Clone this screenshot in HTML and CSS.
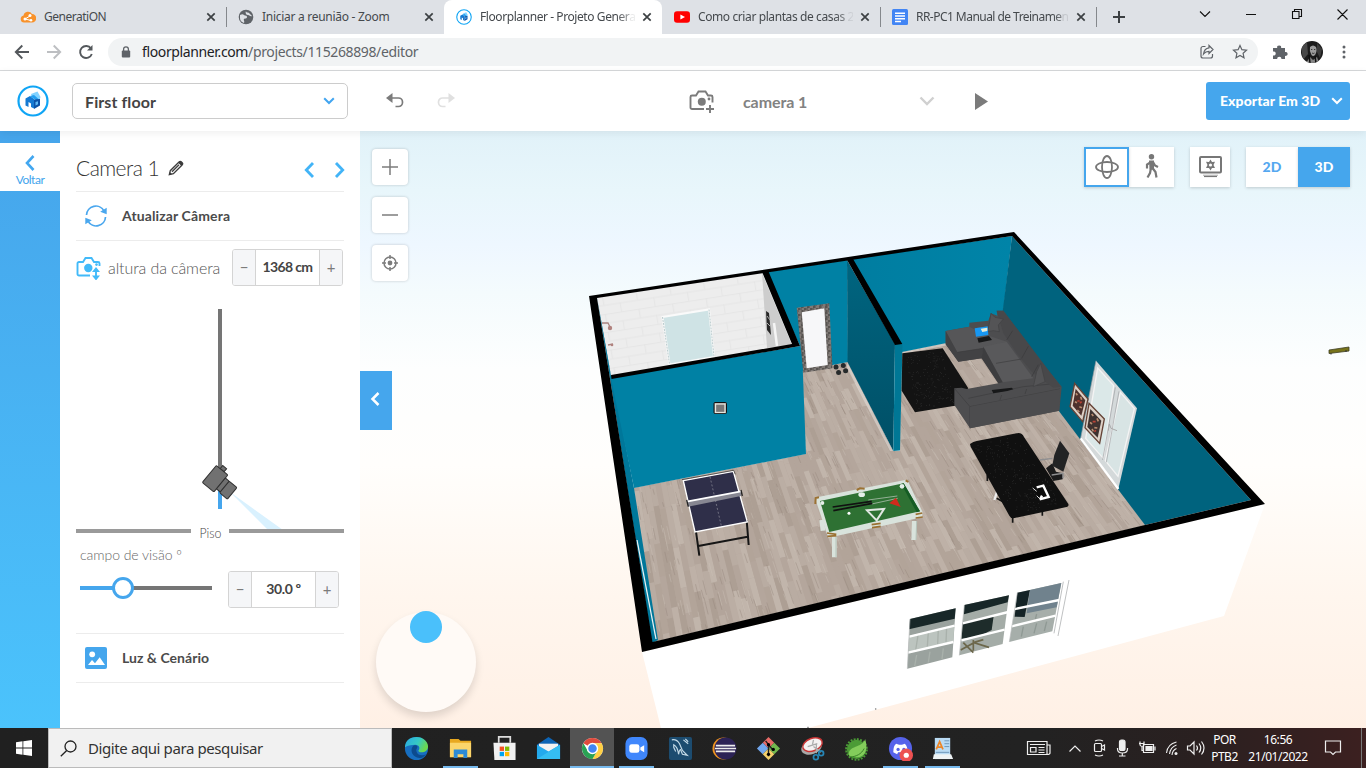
FILE: index.html
```html
<!DOCTYPE html>
<html lang="pt-BR">
<head>
<meta charset="utf-8">
<title>Floorplanner - Projeto GeneratiON</title>
<link rel="stylesheet" href="styles.css">
</head>
<body>
<div class="tabs">
  <div class="tab">
    <svg class="fav" viewBox="0 0 16 16"><path d="M4 13.500a3.600 3.600 0 0 1-.5-7.100A4.600 4.600 0 0 1 12 5a4.200 4.200 0 0 1 0 8.500z" fill="#f8922b"/><path d="M5 10l5-3M5 10l6 1.500" stroke="#fff" stroke-width="1"/><circle cx="5" cy="10" r="1.500" fill="#fff"/><circle cx="10" cy="6.500" r="1.500" fill="#fff"/><circle cx="11" cy="11.300" r="1.300" fill="#fff"/></svg>
    <span class="tab-title t1">GeneratiON</span><svg class="x" viewBox="0 0 10 10"><path d="M1.300 1.300l7.400 7.400M8.700 1.300L1.300 8.700"/></svg>
  </div>
  <div class="tab sep">
    <svg class="fav" viewBox="0 0 16 16"><circle cx="8" cy="8" r="7.300" fill="#5f6368"/><path d="M2 6c2-1 3-1 4 0s3 0 3 2-2 1-3 2 1 2 0 4C3 13 2 11 2 9zM8 2c0 2 2 1 3 2s2 2 3 3c-2 1-2-1-4-1S7 4 8 2z" fill="#dee1e6"/></svg>
    <span class="tab-title t2">Iniciar a reunião - Zoom</span><svg class="x" viewBox="0 0 10 10"><path d="M1.300 1.300l7.400 7.400M8.700 1.300L1.300 8.700"/></svg>
  </div>
  <div class="tab active">
    <svg class="fav" viewBox="0 0 32 32"><use href="#fp-logo"/></svg>
    <span class="tab-title t3 fade">Floorplanner - Projeto Gener<i>a</i></span><svg class="x" viewBox="0 0 10 10"><path d="M1.300 1.300l7.400 7.400M8.700 1.300L1.300 8.700"/></svg>
  </div>
  <div class="tab">
    <svg class="fav" viewBox="0 0 16 16"><rect y="2.300" width="16" height="11.400" rx="3" fill="#f00"/><path d="M6.400 5.400v5.200L11 8z" fill="#fff"/></svg>
    <span class="tab-title t4 fade">Como criar plantas de casas <i>2</i></span><svg class="x" viewBox="0 0 10 10"><path d="M1.300 1.300l7.400 7.400M8.700 1.300L1.300 8.700"/></svg>
  </div>
  <div class="tab sep end">
    <svg class="fav" viewBox="0 0 16 16"><rect width="16" height="16" rx="1.500" fill="#4285f4"/><path d="M3 4.300h10M3 7h10M3 9.700h10M3 12.400h6" stroke="#fff" stroke-width="1.500"/></svg>
    <span class="tab-title t5 fade">RR-PC1 Manual de Treiname<i>n</i></span><svg class="x" viewBox="0 0 10 10"><path d="M1.300 1.300l7.400 7.400M8.700 1.300L1.300 8.700"/></svg>
  </div>
  <svg class="plus" viewBox="0 0 12 12"><path d="M6 0v12M0 6h12" stroke="#3c4043" stroke-width="2"/></svg>
  <svg class="wins" viewBox="0 0 160 34" fill="none" stroke="#111" stroke-width="1.100"><path d="M4 11.500l5 5 5-5M50 14.500h10M98.500 12v-2.500h7v7H103M96.500 11.500h6.500v7h-6.500zM141.500 9.500l10 10M151.500 9.500l-10 10"/></svg>
</div>

<div class="nav">
  <svg class="navbtns" viewBox="0 0 108 36" fill="none" stroke="#54585c" stroke-width="1.900"><path d="M29 18H16.500M22.300 11.500L15.800 18l6.500 6.500"/><path d="M47 18h12.500M53.700 11.500l6.500 6.500-6.500 6.500" stroke="#bdbfc2"/><path d="M91 14.500a6 6 0 1 0 .8 5.500"/><path d="M92.500 11v5.500H87z" fill="#54585c" stroke="none"/></svg>
  <div class="omni">
    <svg class="lock" viewBox="0 0 10 12"><path d="M2.600 5V3.300a2.400 2.400 0 0 1 4.800 0V5" fill="none" stroke="#5f6368" stroke-width="1.300"/><rect x=".8" y="4.500" width="8.400" height="7" rx="1" fill="#5f6368"/></svg>
    <span class="url">floorplanner.com<i>/projects/115268898/editor</i></span>
    <svg class="omni-icons" viewBox="0 0 54 20" fill="none" stroke="#5f6368" stroke-width="1.200"><path d="M6.500 4.500H4a2 2 0 0 0-2 2V14a2 2 0 0 0 2 2h7.500a2 2 0 0 0 2-2v-2"/><path d="M10 3.500l4 4-4 4V9.300C7.500 9.300 6 10 4.500 12c.4-3.300 2.200-5.700 5.500-6.200z"/><path d="M41 3.500l1.900 4.200 4.600.5-3.400 3.100.9 4.500-4-2.300-4 2.300.9-4.500-3.400-3.100 4.600-.5z"/></svg>
  </div>
  <svg class="ext" viewBox="0 0 16 16"><path d="M1 4h4.200a2 2 0 1 1 3.900 0H13v4a2 2 0 1 1 0 3.800V15H9.500a2 2 0 1 0-4.400 0H1v-3.500a2.100 2.100 0 1 0 0-4z" fill="#5f6368"/></svg>
  <svg class="avatar" viewBox="0 0 22 22"><defs><clipPath id="av"><circle cx="11" cy="11" r="11"/></clipPath></defs><g clip-path="url(#av)"><rect width="22" height="22" fill="#1c1c1c"/><path d="M0 5l6-4 1 12-5 6z" fill="#484848"/><path d="M16 2l5 6-2 9-3-6z" fill="#3c3c3c"/><path d="M9 6q3-3 6 0 1.500 4-1 8-2 2-3.500 0Q8 10 9 6" fill="#9c9c9c"/><path d="M10 8.500h1.300M13 8.500h1.300M11 12q1.300 1 2.500 0" stroke="#2b2b2b" stroke-width=".9" fill="none"/><path d="M5 22l4-6 3 3 4-3 2 6z" fill="#858585"/><path d="M8 14l1 8M14 15l1 7" stroke="#111" stroke-width="1.500"/></g></svg>
  <svg class="dots" viewBox="0 0 4 16" fill="#5f6368"><circle cx="2" cy="3" r="1.500"/><circle cx="2" cy="8" r="1.500"/><circle cx="2" cy="13" r="1.500"/></svg>
</div>

<div class="appbar">
  <svg class="logo" viewBox="0 0 32 32"><g id="fp-logo"><circle cx="16" cy="16" r="14.500" fill="#fff" stroke="#0fa5f5" stroke-width="2.200"/><path d="M14 9l6.500-2.500L23.500 12l-1 3-7-2z" fill="#82d2ff"/><path d="M8.500 13.500l4.500-2.500 4 3v9.500l-3-1.500v-3.500l-2.500-1.500V22l-3-1.500z" fill="#1479d2"/><path d="M13 11l4-1 5 4.500-2 1-3-1.500z" fill="#239ff0"/><path d="M17 14.500l6-.5v6.500l-6 3.500z" fill="#0b52a7"/><path d="M18.500 17l2.500-.8v3l-2.500 1.300z" fill="#5fb9f5"/></g></svg>
  <div class="floor-select"><span>First floor</span><svg width="12" height="8" viewBox="0 0 12 8"><path d="M1.200 1.200L6 6l4.800-4.800" fill="none" stroke="#42a5f0" stroke-width="2"/></svg></div>
  <svg class="undo" viewBox="0 0 18 16"><path d="M5 5h7.500a4 4 0 0 1 4 4v.5a4 4 0 0 1-4 4H9.500" fill="none" stroke="#7b7b7b" stroke-width="1.700"/><path d="M6.500 0v10L0 5z" fill="#7b7b7b"/></svg>
  <svg class="undo redo" viewBox="0 0 18 16"><path d="M13 5H5.500a4 4 0 0 0-4 4v.5a4 4 0 0 0 4 4h3" fill="none" stroke="#e0e0e0" stroke-width="1.700"/><path d="M11.500 0v10L18 5z" fill="#e0e0e0"/></svg>
  <svg class="addcam" viewBox="0 0 26 23" fill="none" stroke="#7b7b7b" stroke-width="1.900"><path d="M15 19H3a1.500 1.500 0 0 1-1.500-1.500V7A1.500 1.500 0 0 1 3 5.500h4L9.500 1.500h7L19 5.500h3A1.500 1.500 0 0 1 23.500 7v5.500M17 19h8M21 15v8"/><circle cx="12.800" cy="11.800" r="4" fill="#7b7b7b" stroke="none"/><circle cx="20" cy="9" r="1.400" fill="#7b7b7b" stroke="none"/></svg>
  <span class="cam-name">camera 1</span>
  <svg class="cam-chev" viewBox="0 0 16 10"><path d="M1.500 1.500L8 8l6.500-6.500" fill="none" stroke="#d0d0d0" stroke-width="2.400"/></svg>
  <svg class="play" viewBox="0 0 13 17"><path d="M0 0l13 8.500L0 17z" fill="#7b7b7b"/></svg>
  <div class="export"><span>Exportar Em 3D</span><svg width="12" height="8" viewBox="0 0 12 8"><path d="M1.200 1.200L6 6l4.800-4.800" fill="none" stroke="#fff" stroke-width="2"/></svg></div>
</div>

<div class="main">
  <div class="rail"><div class="back"><svg width="10" height="16" viewBox="0 0 10 16"><path d="M8.500 1L2 8l6.500 7" fill="none" stroke="#42a7f0" stroke-width="2.600"/></svg><span>Voltar</span></div></div>
  <div class="side">
    <div class="row title"><span>Camera 1</span>
      <svg class="pencil" viewBox="0 0 16 16"><path d="M1.300 14.700l1-4L11 2q1.300-1.200 2.500 0l.6.600q1.200 1.200 0 2.400l-8.700 8.700z" fill="#fff" stroke="#3c3c3c" stroke-width="1.300"/><path d="M10.200 2.800l3 3 1.300-1.400q.5-1.200-.4-2.100t-2.400-.8zM1 15l.9-3 2.100 2.100z" fill="#3c3c3c"/><path d="M4 11.800l7-7" stroke="#3c3c3c" stroke-width="1.300"/></svg>
      <svg class="arrows" viewBox="0 0 42 16" fill="none" stroke="#42b4f7" stroke-width="2.800"><path d="M9 1L2.300 8 9 15M32 1l6.700 7L32 15"/></svg>
    </div>
    <div class="row item">
      <svg class="ico" viewBox="0 0 24 24"><path d="M2.500 11A9.300 9.300 0 0 1 20 7M21.500 13A9.300 9.300 0 0 1 4 17" fill="none" stroke="#4aa7ee" stroke-width="1.700"/><path d="M22.700 3.800v6.500l-6.500-2.500zM1.300 20.200v-6.500l6.500 2.500z" fill="#4aa7ee"/></svg>
      <b>Atualizar Câmera</b></div>
    <div class="height-row">
      <svg class="hcam" viewBox="0 0 26 24" fill="none" stroke="#42baf9" stroke-width="1.900"><path d="M14 19.500H3A1.500 1.500 0 0 1 1.500 18V7.500A1.500 1.500 0 0 1 3 6h4l2.500-4h6L18 6h4a1.500 1.500 0 0 1 1.500 1.500V10M20 14v8"/><circle cx="12.300" cy="12" r="4.200" fill="#42baf9" stroke="none"/><circle cx="20.500" cy="8.600" r="1.300" fill="#42baf9" stroke="none"/><path d="M20 11l4 5h-8zM20 24.500l4-5h-8z" fill="#42baf9" stroke="none"/></svg>
      <span>altura da câmera</span>
      <div class="stepper"><em>−</em><b>1368 cm</b><em>+</em></div>
    </div>
    <svg class="diagram" viewBox="76 295 268 250">
      <path d="M220 309v174" stroke="#757575" stroke-width="4"/><path d="M220 483v26" stroke="#45a6ed" stroke-width="4"/>
      <path d="M230 492l53 38h-15z" fill="#d9f1fe"/>
      <path d="M76 531h115M229 531h115" stroke="#9a9a9a" stroke-width="4"/>
      <g transform="translate(215.500 479) rotate(-50.500)" fill="#717171" stroke="#303030" stroke-width="1"><path d="M11-3h4v5h-4z"/><rect x="-11" y="-8" width="22" height="15" rx="1"/><rect x="-7" y="7" width="14" height="5"/><rect x="-8" y="12" width="15" height="10" rx="1"/></g>
      <text x="199.500" y="537.500" textLength="22" lengthAdjust="spacingAndGlyphs" class="piso">Piso</text>
    </svg>
    <div class="fov-label">campo de visão º</div>
    <div class="fov"><div class="slider"><div class="fill"></div><div class="rest"></div><div class="knob"></div></div><div class="stepper"><em>−</em><b>30.0 º</b><em>+</em></div></div>
    <div class="row item light">
      <svg class="ico" viewBox="0 0 24 24"><rect x="1" y="1" width="22" height="22" rx="2" fill="#45a6ed"/><circle cx="8.200" cy="8.300" r="2.900" fill="#fff"/><path d="M4 19l4-5 3 3.300 4.700-6 5.300 7.700z" fill="#fff"/></svg>
      <b>Luz &amp; Cenário</b></div>
  </div>

  <div class="view">
    <svg class="scene" viewBox="360 131 1006 597">
      <defs>
        <clipPath id="floorclip"><path d="M634 488L806 454 801 371 848 362 893 451 900 451 902 352 1000 332 1146 525 653 642z"/></clipPath>
        <pattern id="tiles" width="34" height="18" patternUnits="userSpaceOnUse" patternTransform="matrix(.988 -.155 .16 .988 597 297)"><rect width="34" height="18" fill="#ededed"/><path d="M0 .5h34M0 9.500h34M5.500 0v9M22 9v9" stroke="#e3e3e3" stroke-width=".8"/></pattern>
        <pattern id="stone" width="6" height="6" patternUnits="userSpaceOnUse"><rect width="6" height="6" fill="#696461"/><path d="M0 1h3M4 3h2M1 5h2" stroke="#968f8b"/><path d="M3 1h2M0 3h2M4 5h1" stroke="#474341"/></pattern>
        <linearGradient id="bw" x2="1" y2="0"><stop stop-color="#007da0"/><stop offset="1" stop-color="#0084a8"/></linearGradient>
        <linearGradient id="pt" y2="1" x2="0"><stop stop-color="#006580"/><stop offset="1" stop-color="#004f66"/></linearGradient>
      </defs>
      <path d="M642 652L1265 504 1224 616 808 728H661z" fill="#fff"/>
      <g clip-path="url(#floorclip)"><rect x="600" y="310" width="560" height="350" fill="#b5a79d"/><g id="planks"></g></g>
      <path d="M847 362l46 89-3 0-43-83zM902 352l98-20v3l-98 19z" fill="#fff" opacity=".35"/>
      <!-- walls -->
      <path d="M597 297L612 375 634 488 658 640 652 643z" fill="#00779a"/>
      <path d="M637 540L656 639" stroke="#e9f1f3" stroke-width="1.300"/>
      <path d="M597 297L762 273 792 345 611 376z" fill="url(#tiles)"/>
      <path d="M762 273L792 345 767 348z" fill="#cdcdcd"/>
      <path d="M597 297l14 79-4-20z" fill="#00789c"/>
      <path d="M662.500 317L709 309.500 714 357 669.500 364.500z" fill="#cfe3e5" stroke="#fafafa" stroke-width="2"/>
      <path d="M662.500 317l7 47M709 309.500l5 47" stroke="#9fb8ba" stroke-width=".7" stroke-dasharray="2 1"/>
      <path d="M766 311l3 2 2 22-4-5z" fill="#262626"/><path d="M767 316l3 4M767 323l4 4" stroke="#aaa"/><path d="M774 323l3 23" stroke="#f5f5f5" stroke-width="2.500"/>
      <path d="M602 323h6l2 4M608 345l5-1" stroke="#aa8480" stroke-width="1.300" fill="none"/><circle cx="610" cy="328" r="2.200" fill="#b1827e"/><circle cx="612" cy="345" r="1.300" fill="#b1827e"/>
      <path d="M766 272L847 260 848 362 802 371 800 346z" fill="#0081a4"/>
      <path d="M851 259L1012 236 1001 332 902 352z" fill="url(#bw)"/>
      <path d="M1012 236L1251 500 1145 525 1000 333z" fill="#00637e"/>
      <path d="M611 378L800 346 802 350 806 454 634 488z" fill="#0081a4"/>
      <path d="M847 260L895 344 893.300 451 847.500 362z" fill="url(#pt)"/>
      <path d="M895 344h7.500L900 450.500l-6.700.5z" fill="#007795"/>
      <!-- mirror and weights -->
      <path d="M796.700 307.700L829.300 303.300 832.500 368.300 803.300 372.700z" fill="url(#stone)"/><path d="M801.700 312.300L824.300 308.300 827.700 365 806.700 368.300z" fill="#f7f7f9"/>
      <g fill="#262a2b"><circle cx="836" cy="367" r="2.500"/><circle cx="843.300" cy="365.500" r="2.500"/><circle cx="838.600" cy="372.500" r="2.500"/><circle cx="845.600" cy="370.700" r="2.500"/></g>
      <rect x="714" y="402.500" width="12.500" height="11" rx="1" fill="#777" stroke="#111"/><rect x="715.500" y="404" width="9.500" height="8.500" fill="#777" stroke="#e5e5dd" stroke-width="1.300"/>
      <!-- living area -->
      <g transform="translate(840 225) scale(.33333)">
        <path d="M187 385L308 370 385 490 345 542 225 562 185 497z" fill="#131313"/><g id="rugfleck"></g>
        <path d="M317 318L388 305V293L445 287 453 265 472 272 470 257 490 257 560 350 600 405 665 485 658 557 390 610 343 540V490L365 488 380 492 475 475 425 400 355 410 317 358z" fill="#4d4d4f"/>
        <path d="M317 318L388 305 440 330 500 350 430 372 352 382z" fill="#565658"/><path d="M352 382L430 370 425 400 355 410 317 358V318z" fill="#424244"/>
        <path d="M430 365L500 350 580 460 488 472z" fill="#59595b"/><path d="M430 365L488 472 475 475 425 400z" fill="#3d3d3f"/>
        <path d="M468 415L545 402M352 382L430 370M343 490L390 545 660 492M390 545V610M480 525l5-15M555 507l5-15M385 520L550 485 655 475" fill="none" stroke="#3c3c3e" stroke-width="2"/>
        <path d="M470 257L490 257 570 362 663 485 640 488 575 440 530 385 490 325z" fill="#48484a"/><path d="M500 345l18-28M545 400l20-36M575 455l20-36" stroke="#39393b" stroke-width="2"/>
        <path d="M453 265L465 277 490 282 475 300 478 320 460 317 443 320 448 295zM590 440L602 415 615 470 580 485z" fill="#545456" stroke="#414143" stroke-width="2"/>
        <path d="M390 545L660 492 658 557 390 610z" fill="#4c4c4e"/>
        <path d="M455 495l60-7 5 5-18 5-42 7zM412 340l35-7 9 12-40 8z" fill="#171819"/><path d="M404 310L443 304 445 330 408 335z" fill="#1797f2"/><path d="M422 311l20-3v10l-15 3z" fill="#e7edda"/>
        <!-- glazed door -->
        <path d="M768 407L891 550 835 792 722 640z" fill="#d4d9da"/><path d="M773 429L821 482 790 700 737 640z" fill="#dbe8e8" stroke="#f4f4f4" stroke-width="4"/><path d="M841 502L883 551 834 754 796 707z" fill="#d8e4e4" stroke="#f4f4f4" stroke-width="4"/><path d="M826 487L788 705M837 499L799 712M768 407L722 640" stroke="#9d9fa1" stroke-width="2"/><path d="M722 640L835 792" stroke="#fff" stroke-width="7"/><path d="M805 617l3-20 5 13 18 7" fill="none" stroke="#aaa" stroke-width="3"/>
        <path d="M704 475L744 522 728 590 690 545z" fill="#ddd1c7" stroke="#654337" stroke-width="4"/><path d="M707 491L736 526 724 572 698 542z" fill="#4d312d"/><path d="M747 535L793 582 779 655 735 608z" fill="#ddd1c7" stroke="#654337" stroke-width="4"/><path d="M751 552L784 587 773 638 742 606z" fill="#3e3230"/><path d="M708 505l4 6M722 515l3 9M705 530l6 3M718 545l8 3M712 555l6 6M755 567l5 6M771 580l4 9M750 592l6 5M763 608l9 1M756 612l4 7" fill="none" stroke="#b98d70" stroke-width="5"/><path d="M712 528h7M720 534l5-4M758 590h9M763 620l5-4" stroke="#b94135" stroke-width="5"/>
        <!-- desk -->
        <path d="M473 795L463 825" stroke="#eee" stroke-width="7"/><path d="M442 750v18M518 875v18M607 855v17M470 820l22 12" stroke="#151515" stroke-width="5"/>
        <path d="M390 657Q400 650 410 648L535 624Q547 624 552 636L685 837Q688 845 676 847L520 880Q512 880 508 872L392 665z" fill="#101010"/><g id="deskfleck"></g>
        <path d="M582 789L610 784 625 815 598 822z" fill="#0c0c0c"/><path d="M590 787l20-5 16 34-27 7M606 812l-6 11" fill="none" stroke="#fff" stroke-width="7"/><path d="M578 789l12 10M590 812l8 8" stroke="#ddd" stroke-width="3"/>
        <path d="M618 730L637 715 648 740 668 745 668 763 640 768z" fill="#1b1b1c"/><path d="M660 647L688 685 670 740 637 722 643 690z" fill="#222324"/><path d="M600 705l37-5M635 750l34-5v15" fill="none" stroke="#8e8e90" stroke-width="4"/>
      </g>
      <!-- game tables and facade windows -->
      <g transform="translate(590 440) scale(.33333)">
        <path d="M318 275l10 72M470 240l6 75M325 318l148-28" stroke="#161616" stroke-width="6"/>
        <path d="M280 122L430 94 472 246 315 276z" fill="#2f2f49" stroke="#fff" stroke-width="4"/><path d="M276 119L431 91l5 12" fill="none" stroke="#222" stroke-width="2"/><path d="M360 110l34 148" stroke="#94949f" stroke-width="2" stroke-dasharray="6 6"/>
        <path d="M290 184L453 154 453 168 294 200z" fill="#878792"/><path d="M290 185L453 154" stroke="#fff" stroke-width="5"/><path d="M290 180l5 20M453 150l4 18" stroke="#222" stroke-width="4"/>
        <path d="M695 240l4 32M733 290v62M973 243l-2 57" stroke="#d9e3dc" stroke-width="14"/><path d="M738 290v62M980 243l-2 57" stroke="#b6c5bb" stroke-width="3"/>
        <path d="M676 177Q678 172 684 171L945 120Q953 120 956 128L998 217 996 232 715 293z" fill="#d9e3dc"/><path d="M690 183L941 130 990 214 718 276z" fill="#2e7133"/><path d="M941 130L990 214 980 217 934 132z" fill="#155c24"/>
        <path d="M676 192l1-18 10-2M947 121l8 5M800 150l10-5 14 1" fill="none" stroke="#9b7132" stroke-width="6"/><path d="M711 279l28 4M712 289l27-2M845 254l27-4M846 263l26-4M977 223l20-4M977 234l21-3" stroke="#9b7132" stroke-width="5"/>
        <ellipse cx="815" cy="164" rx="10" ry="7" fill="#e4eee8"/><circle cx="697" cy="189" r="6" fill="#e4eee8"/><circle cx="936" cy="139" r="7" fill="#e4eee8"/><circle cx="777" cy="220" r="4.500" fill="#fff"/>
        <path d="M835 180L922 168M845 192l78-17" stroke="#c6cfc5" stroke-width="2"/><path d="M728 201L845 184M730 212L847 190" stroke="#111" stroke-width="5"/><path d="M831 211L882 207 860 241z" fill="none" stroke="#e1e7e2" stroke-width="6"/><path d="M898 190l20-17 14 28z" fill="#d12b1d"/>
        <path d="M960 537L1097 505 1087 652 952 686z" fill="#9aa29e"/><path d="M960 537L1097 505 1094 536 957 568z" fill="#182728"/><path d="M957 588l136-31-3 47-135 33z" fill="#bcc4bf"/><path d="M985 580l-8 50M1015 575l-3 45M1045 568l-2 45M1070 562l-2 45M980 645l-6 33M1020 635l-5 32M1060 625l-4 32" stroke="#a9b1ab" stroke-width="4"/><path d="M958 590L1094 557M954 638L1090 606" stroke="#fff" stroke-width="7"/>
        <path d="M1123 495L1257 466 1238 612 1108 646z" fill="#a4aca7"/><path d="M1123 495L1257 466 1253 487 1122 523z" fill="#182728"/><path d="M1118 549L1211 528 1205 570 1165 590 1115 596z" fill="#1e2c2b"/><path d="M1112 630l40-22 45 14M1120 608l30 30M1150 600v32M1150 608l30-9" stroke="#6c674b" stroke-width="5" fill="none"/><path d="M1118 550L1255 516M1114 601L1244 569" stroke="#fff" stroke-width="7"/>
        <path d="M1282 458L1414 429 1387 574 1258 606z" fill="#a6aeaa"/><path d="M1282 458L1320 450 1304 531 1274 530z" fill="#142326"/><path d="M1320 450L1414 429 1400 502 1310 520z" fill="#70828d"/><path d="M1300 560l-6 30M1340 550l-8 30M1370 545l-7 28M1340 522l-4 16" stroke="#8f9994" stroke-width="4"/><path d="M1270 508L1408 480M1265 559L1397 527" stroke="#fff" stroke-width="7"/><path d="M1420 425l-28 155M1437 420l-33 168" stroke="#bfc1c2" stroke-width="3"/>
        <path d="M960 537L952 686M1123 495l-15 151M1282 458l-24 148" stroke="#b9bdbd" stroke-width="2"/><path d="M855 807h4M652 862h4" stroke="#555" stroke-width="3"/>
      </g>
      <path d="M589 296L1014 232 1265 504 642 652zM597 298L652.500 642 1145 525 1251 500 1012 236z" fill="#000" fill-rule="evenodd"/>
      <path d="M761.700 271h6.600L800 346 611.500 379 611 375 792 344zM846.500 259L852.500 258 902.300 344 895 345z" fill="#000"/>
      <path d="M1329 350l20-3v4l-20 2.500z" fill="#77731b" stroke="#3e3d25" stroke-width=".8"/><path d="M1331 353v1.500M1346 350v2" stroke="#333"/>
    </svg>

    <div class="zooms">
      <div><svg viewBox="0 0 36 36"><path d="M18 10v16M10 18h16"/></svg></div>
      <div><svg viewBox="0 0 36 36"><path d="M10 18h16"/></svg></div>
      <div><svg viewBox="0 0 36 36"><circle cx="18" cy="18" r="6"/><circle cx="18" cy="18" r="2.400" fill="#7c7c7c" stroke="none"/><path d="M18 10v4M18 22v4M10 18h4M22 18h4"/></svg></div>
    </div>
    <div class="handle"><svg width="10" height="14" viewBox="0 0 10 14"><path d="M8.500 1L2.500 7l6 6" fill="none" stroke="#fff" stroke-width="2.500"/></svg></div>
    <div class="joy"></div><div class="joydot"></div>
    <div class="modes">
      <div class="orbit"><svg width="26" height="26" viewBox="0 0 26 26" fill="none" stroke="#777" stroke-width="1.800"><ellipse cx="13" cy="13" rx="11" ry="5"/><ellipse cx="13" cy="13" rx="5" ry="11"/></svg></div>
      <div class="walk"><svg width="16" height="25" viewBox="0 0 16 25"><circle cx="7.500" cy="2.800" r="2.700" fill="#777"/><path d="M7 8L3 10.500v4M9 8l2 3.500 3 1.500M7 14l-1 5-2.500 4.500M8.500 14l3 4 1 5.500" fill="none" stroke="#777" stroke-width="2.200"/><path d="M5 6.500h5v9H5.500z" fill="#777"/></svg></div>
      <div class="screen"><svg width="24" height="24" viewBox="0 0 24 24"><rect x="2" y="2" width="21" height="15.500" rx="1" fill="none" stroke="#777" stroke-width="2"/><path d="M5 19.700h15v1H5z" fill="#aaa"/><path d="M6 21.500h13" stroke="#777" stroke-width="1.200"/><path d="M12.500 4.500l1.500 2.500 3-.2L15.500 10l1.500 3-3-.1-1.500 2.600L11 12.900l-3 .1L9.500 10 8 6.800l3 .2z" fill="#777"/><circle cx="12.500" cy="10" r="1.600" fill="#fff"/></svg></div>
      <div class="d2">2D</div><div class="d3">3D</div>
    </div>
  </div>
</div>

<div class="taskbar">
  <div class="start"><svg width="16" height="16" viewBox="0 0 16 16"><path d="M0 2.200L6.500 1.300v6.300H0zM7.300 1.200L16 0v7.600H7.300zM0 8.400h6.500v6.300L0 13.800zM7.300 8.400H16V16l-8.700-1.200z" fill="#fff"/></svg></div>
  <div class="search"><svg width="17" height="17" viewBox="0 0 17 17"><circle cx="10.500" cy="6.500" r="5.500" fill="none" stroke="#222" stroke-width="1.300"/><path d="M6.700 10.500L.8 16.300" stroke="#222" stroke-width="1.300"/></svg><span>Digite aqui para pesquisar</span></div>
  <div class="apps">
    <div><svg viewBox="0 0 26 26"><defs><linearGradient id="eg" x2="1" y2=".4"><stop stop-color="#29a8e5"/><stop offset=".6" stop-color="#36c9c4"/><stop offset="1" stop-color="#6bd84f"/></linearGradient></defs><circle cx="13" cy="13" r="12" fill="#176ec0"/><path d="M1 12C1 5 6 1 13 1s12 5 12 10c0 4-3 6-7 6-2 0-3-1-3-2 2-2 1-6-3-6-5 0-9 1-11 3" fill="url(#eg)"/><path d="M9 11c-3 5 0 11 7 12 4 0 6-3 7-4-4 2-9 1-10-3-1-2 1-3 1-5-1-2-4-2-5 0" fill="#0c4b8e"/></svg></div>
    <div class="run"><svg viewBox="0 0 26 26"><path d="M2 3h9l2 2h11v17H2z" fill="#e8a820"/><path d="M2 7h22v15H2z" fill="#fbd56b"/><path d="M6 23v-9h14v9h-4v-4h-6v4z" fill="#2c8bd6"/></svg></div>
    <div><svg viewBox="0 0 26 26"><path d="M7 7V1h12v6" fill="none" stroke="#ddd" stroke-width="1.800"/><path d="M1.500 7h23v18h-22z" fill="#f1f1f1"/><path d="M8 11h4.500v4.500H8z" fill="#f25022"/><path d="M13.500 11H18v4.500h-4.500z" fill="#7fba00"/><path d="M8 16.500h4.500V21H8z" fill="#00a4ef"/><path d="M13.500 16.500H18V21h-4.500z" fill="#ffb900"/></svg></div>
    <div><svg viewBox="0 0 26 26"><path d="M1 9l12-8 12 8v15H1z" fill="#0c64b5"/><path d="M3 8h20v9H3z" fill="#f2f2f2"/><path d="M1 9l12 7 12-7v15H1z" fill="#23a9ed"/><path d="M1 24L25 9v15z" fill="#35bdf2"/></svg></div>
    <div class="run on"><svg viewBox="0 0 26 26"><circle cx="13" cy="13" r="11" fill="#fff"/><path d="M13 13L3.500 7.500A11 11 0 0 1 22.500 7.500H13z" fill="#df4b3d"/><path d="M13 7.500h9.500A11 11 0 0 1 13 24l4.800-8.300z" fill="#ffcf44"/><path d="M3.500 7.500A11 11 0 0 0 13 24l4.800-8.300-9 1z" fill="#29a254"/><circle cx="13" cy="13" r="5.200" fill="#4285f4" stroke="#fff" stroke-width="1.500"/></svg></div>
    <div class="run"><svg viewBox="0 0 26 26"><rect x="1.500" y="1" width="23" height="24" rx="7" fill="#4087fc"/><rect x="5.500" y="8.500" width="10.500" height="9" rx="2.500" fill="#fff"/><path d="M17 12l4-2.500v7.500l-4-2.500z" fill="#fff"/></svg></div>
    <div><svg viewBox="0 0 26 26"><rect x="1" y="1" width="24" height="24" rx="2" fill="#1c4c70"/><path d="M4 4q5-1 8 4l3 7 5 5-5-1-2-5q-1 0-2 5-1-8-5-10L6 12l2 4M16 4l5 4M18 3l3 3" fill="none" stroke="#c5dbe8" stroke-width="1.200"/></svg></div>
    <div><svg viewBox="0 0 26 26"><circle cx="12" cy="13" r="11.500" fill="#ef9421"/><circle cx="14" cy="13" r="11.500" fill="#2c2255"/><path d="M4 10h20M3 13h22M4 16h20" stroke="#eee" stroke-width="1.700"/></svg></div>
    <div><svg viewBox="0 0 26 26"><path d="M13 1l6 6-6 6-6-6z" fill="#e76a67"/><path d="M7 7l6 6-6 6-6-6z" fill="#72a7ed"/><path d="M19 7l6 6-6 6-6-6z" fill="#72b84e"/><path d="M13 13l6 6-6 6-6-6z" fill="#f4d16b"/><path d="M10 5l3 4v12M13 9l5 6" stroke="#222" stroke-width="1.500" fill="none"/><circle cx="13" cy="9" r="1.700"/><circle cx="18" cy="14" r="1.700"/><circle cx="13" cy="19" r="1.700"/></svg></div>
    <div><svg viewBox="0 0 26 26"><ellipse cx="12" cy="12" rx="11" ry="7" fill="#a9a9a9" transform="rotate(-20 12 12)"/><ellipse cx="13" cy="9" rx="10.500" ry="6.500" fill="#f4f1f1" stroke="#c93535" stroke-width="1.500" transform="rotate(-20 13 9)"/><path d="M13 9l1-5M8 11l10-3M14 11l8 6M17 8v10" stroke="#aaa" stroke-width="1.300"/><circle cx="22" cy="18" r="2.500" fill="none" stroke="#2786b6" stroke-width="1.800"/><circle cx="16.500" cy="22" r="2.500" fill="none" stroke="#2786b6" stroke-width="1.800"/></svg></div>
    <div><svg viewBox="0 0 26 26"><circle cx="13" cy="14" r="10" fill="#4b9b36"/><circle cx="13" cy="14" r="10.800" fill="none" stroke="#4b9b36" stroke-width="2" stroke-dasharray="2 1.400"/><path d="M5 20C4 9 19 13 22 3c3 10 1 19-9 19-3 0-6-1-8-2" fill="#83cc5b"/><path d="M7 22c6-1 11-3 14-9" stroke="#387f28" fill="none"/></svg></div>
    <div class="run"><svg viewBox="0 0 26 26"><circle cx="13" cy="13" r="12" fill="#5663ea"/><path d="M5.500 17q0-7 3-9l3 1h3l3-1q3 3 3 9l-4 2-1-2h-5l-1 2z" fill="#fff"/><circle cx="10.500" cy="14" r="1.700" fill="#5663ea"/><circle cx="16.500" cy="14" r="1.700" fill="#5663ea"/><circle cx="19" cy="20" r="7" fill="#ed5151"/><circle cx="19" cy="20" r="2.700" fill="#fff"/></svg></div>
    <div class="run last"><svg viewBox="0 0 26 26"><path d="M5 2h16v22H5z" fill="#b9dbf4"/><path d="M4 19h18l2 5H3z" fill="#eef3f5"/><path d="M6 17h14M15 5h5M15 8h5M15 11h5" stroke="#6d96b8" stroke-width="1"/><path d="M6.500 14L10 6l3.500 8M8 11.500h4" fill="none" stroke="#ec8627" stroke-width="1.800"/></svg></div>
  </div>
  <svg class="tray" viewBox="1020 728 188 40" fill="none" stroke="#eee" stroke-width="1.200"><path d="M1027.500 741.500h19.500v13h-19.500zM1047 745h3v8q0 1.500-3 1.500M1030 744.500h15"/><path d="M1030.500 747.500h5.500v4.500h-5.500zM1038.500 747.500h6M1038.500 750h6M1038.500 752.500h6"/><path d="M1069.500 751.500l5.500-5.500 5.500 5.500"/><rect x="1094.500" y="743.500" width="7" height="8" rx="1"/><path d="M1101.500 746.500l3-1.500v5l-3-1.500M1095 741q4-2 8 0M1095 755q4 2 8 0"/><rect x="1119.500" y="740" width="5.500" height="10.500" rx="2" fill="#eee"/><path d="M1117.500 748v1q0 4 5 4t5-4v-1M1122.300 753v3M1119 756h6.500"/><path d="M1143.500 744.500h10v8h-10zM1139 743.500h5M1140 741.500v3.500q2 3 4 0v-3.500M1142 746.500v4h2M1155 746.500v4"/><path d="M1146 746.500h6v4h-6z" fill="#eee"/><g stroke-width="1.100"><path d="M1166.500 753q1-9 10-11M1169.500 754q1-7 7-9M1172 755q.5-5 4.500-6.500"/></g><circle cx="1176" cy="753.500" r="1.500" fill="#eee" stroke="none"/><path d="M1187.500 746h2.500l4-4v12l-4-4h-2.500zM1196.500 745.500q2 2.500 0 5M1199 743.500q3.500 4.500 0 9M1201.500 741.500q5 6.500 0 13"/></svg>
  <div class="clock lang">POR<br>PTB2</div><div class="clock time"><span>16:56</span><br>21/01/2022</div>
  <svg class="notif" viewBox="0 0 18 18"><path d="M1.500 2h15v11h-5L9 15.500 6.500 13h-5z" fill="none" stroke="#eee" stroke-width="1.200"/></svg><div class="peek"></div>
</div>
<script src="floor.js"></script>
</body>
</html>
```

FILE: floor.js
```js
// Projects a grid of planks onto the floor plane of the room.
(function () {
  var q = [[620, 402], [1000, 332], [1145, 525], [657, 640]];
  var dx1 = q[1][0] - q[2][0], dx2 = q[3][0] - q[2][0], dx3 = q[0][0] - q[1][0] + q[2][0] - q[3][0];
  var dy1 = q[1][1] - q[2][1], dy2 = q[3][1] - q[2][1], dy3 = q[0][1] - q[1][1] + q[2][1] - q[3][1];
  var det = dx1 * dy2 - dx2 * dy1;
  var g = (dx3 * dy2 - dx2 * dy3) / det, h = (dx1 * dy3 - dx3 * dy1) / det;
  var a = q[1][0] - q[0][0] + g * q[1][0], b = q[3][0] - q[0][0] + h * q[3][0];
  var d = q[1][1] - q[0][1] + g * q[1][1], e = q[3][1] - q[0][1] + h * q[3][1];
  function pt(u, v) {
    var w = g * u + h * v + 1;
    return ((a * u + b * v + q[0][0]) / w).toFixed(1) + ',' + ((d * u + e * v + q[0][1]) / w).toFixed(1);
  }
  var seed = 17;
  function rnd() { seed = (seed * 16807) % 2147483647; return seed / 2147483647; }
  var tones = ['#b9aca2', '#b2a499', '#beb1a7', '#b4a69c', '#ad9f94', '#bbaea4', '#c1b5ab', '#b3a59b'];
  var out = '', n = 84, i, s;
  for (i = -2; i < n + 3; i++) {
    var v = -0.15 - rnd() * 0.15;
    while (v < 1.1) {
      var l = 0.08 + rnd() * 0.09;
      out += '<polygon points="' + pt(i / n, v) + ' ' + pt((i + 1) / n, v) + ' ' + pt((i + 1) / n, v + l) + ' ' + pt(i / n, v + l) + '" fill="' + tones[Math.floor(rnd() * 8)] + '"/>';
      v += l;
    }
  }
  // Wood grain streaks.
  for (i = 0; i < 900; i++) {
    var u = rnd() * 1.02, w0 = rnd() * 1.05 - 0.03;
    out += '<polyline points="' + pt(u, w0) + ' ' + pt(u + 0.001, w0 + 0.02 + rnd() * 0.04) + '" fill="none" stroke="' + (rnd() > 0.45 ? '#94857a' : '#cec3ba') + '" stroke-width=".8" opacity=".5"/>';
  }
  document.getElementById('planks').innerHTML = out;

  // Scatters light specks over a parallelogram given by origin and two edges.
  function specks(id, count, o, p, r) {
    var t = '';
    for (var k = 0; k < count; k++) {
      s = rnd(); var m = rnd();
      t += '<rect x="' + (o[0] + p[0] * s + r[0] * m).toFixed(0) + '" y="' + (o[1] + p[1] * s + r[1] * m).toFixed(0) + '" width="2" height="2" fill="#363636"/>';
    }
    document.getElementById(id).innerHTML = t;
  }
  specks('rugfleck', 170, [190, 390], [112, -16], [42, 160]);
  specks('deskfleck', 220, [400, 660], [140, -30], [125, 208]);
})();
```

FILE: styles.css
```css
* { box-sizing: border-box; }
body { margin: 0; width: 1366px; height: 768px; overflow: hidden; display: flex; flex-direction: column; background: #fff; font-family: Lato, sans-serif; }
svg { display: block; flex: none; }
.tabs { height: 34px; background: #dee1e6; display: flex; align-items: center; padding-left: 8px; flex: none; font: 12px "Noto Sans", sans-serif; color: #45494d; }
.tab { width: 218px; height: 34px; display: flex; align-items: center; padding: 0 10px 0 12px; flex: none; position: relative; }
.tab.sep::before, .tab.end::after { content: ""; position: absolute; left: 0; top: 7px; width: 1px; height: 20px; background: #85888c; }
.tab.end::after { left: auto; right: 1px; }
.tab.active { background: #fff; border-radius: 8px 8px 0 0; }
.fav { width: 16px; height: 16px; }
.tab-title { margin-left: 8px; width: 155px; white-space: nowrap; flex: none; padding-bottom: 1px; }
.tab-title i { font-style: normal; opacity: .35; }
.fade { -webkit-mask-image: linear-gradient(90deg, #000 88%, rgba(0,0,0,.25)); }
.t1 { letter-spacing: -.48px; } .t2 { letter-spacing: -.28px; } .t3 { letter-spacing: -.42px; } .t4 { letter-spacing: -.4px; } .t5 { letter-spacing: -.54px; }
.end .x { margin-left: 5px; }
.x { width: 10px; height: 10px; margin-left: 7px; }
.x path { stroke: #3c4043; stroke-width: 1.7; fill: none; }
.plus { width: 12px; height: 12px; margin-left: 15px; }
.wins { width: 160px; height: 34px; margin-left: auto; margin-right: 10px; }
.nav { height: 37px; display: flex; align-items: center; border-bottom: 1px solid #d7d9db; flex: none; }
.navbtns { width: 108px; height: 36px; }
.omni { width: 1150px; height: 28px; border-radius: 14px; background: #f1f3f4; display: flex; align-items: center; padding: 0 5px 0 13px; }
.lock { width: 10px; height: 12px; }
.url { margin-left: 11px; font: 14px "Noto Sans", sans-serif; letter-spacing: -.37px; color: #202124; padding-bottom: 1px; }
.url i { font-style: normal; color: #5f6368; }
.omni-icons { width: 54px; height: 20px; margin-left: auto; }
.ext { width: 16px; height: 16px; margin-left: 14px; }
.avatar { width: 22px; height: 22px; margin-left: 13px; }
.dots { width: 4px; height: 16px; margin-left: 19px; }
.appbar { height: 60px; display: flex; align-items: center; padding: 0 16px 0 17px; flex: none; position: relative; z-index: 2; box-shadow: 0 2px 8px rgba(0,0,0,.07); background: #fff; }
.logo { width: 32px; height: 32px; }
.floor-select { margin-left: 23px; width: 276px; height: 36px; border: 1px solid #ccc; border-radius: 5px; display: flex; align-items: center; justify-content: space-between; padding: 0 12px; font: bold 16px Lato, sans-serif; color: #444; }
.floor-select span { letter-spacing: .1px; }
.undo { width: 18px; height: 16px; margin-left: 38px; }
.redo { margin-left: 33px; }
.addcam { width: 26px; height: 23px; margin-left: 234px; }
.cam-name { margin-left: 28px; width: 176px; font: bold 16px Lato, sans-serif; color: #828282; padding-top: 1px; letter-spacing: -.1px; }
.cam-chev { width: 16px; height: 10px; }
.play { width: 13px; height: 17px; margin-left: 40px; }
.export { margin-left: auto; width: 144px; height: 38px; border-radius: 3px; background: #45a6ed; color: #fff; display: flex; align-items: center; justify-content: space-between; padding: 0 7px 0 14px; font: 900 14px Lato, sans-serif; letter-spacing: .06px; }
.export span { padding-bottom: 1px; }
.main { height: 597px; display: flex; flex: none; }
.rail { width: 60px; background: linear-gradient(#46a5eb, #4bc3fc); padding-top: 12px; }
.back { background: #fff; height: 48px; display: flex; flex-direction: column; align-items: center; padding-top: 12px; gap: 1px; font: 12px Lato, sans-serif; color: #42a5ed; letter-spacing: -.5px; }
.side { width: 300px; background: #fff; padding: 0 16px; display: flex; flex-direction: column; }
.row { border-bottom: 1px solid #ececec; display: flex; align-items: center; flex: none; }
.title { height: 61px; padding-top: 13px; font: 300 21px Lato, sans-serif; color: #333; letter-spacing: -.55px; }
.pencil { width: 16px; height: 16px; margin-left: 9px; }
.arrows { width: 42px; height: 16px; margin-left: auto; margin-top: 5px; margin-right: -2px; }
.item { height: 49px; padding-left: 8px; font-size: 14px; color: #4b4b4b; }
.item b { letter-spacing: .12px; padding-bottom: 2px; }
.light b { letter-spacing: .03px; }
.ico { width: 24px; height: 24px; margin-right: 14px; }
.height-row { height: 53px; margin-bottom: 1px; display: flex; align-items: center; font: 300 16px Lato, sans-serif; color: #555; flex: none; }
.hcam { width: 26px; height: 24px; margin-right: 6px; }
.height-row > span { white-space: nowrap; width: 124px; letter-spacing: -.1px; }
.stepper { width: 111px; height: 37px; border: 1px solid #d4d4d4; border-radius: 3px; display: flex; flex: none; overflow: hidden; align-items: stretch; }
.stepper em { width: 22px; background: #f5f6f8; font: 15px/34px Lato, sans-serif; text-align: center; color: #7b7b7b; }
.stepper b { flex: 1; border: solid #d4d4d4; border-width: 0 1px; font: bold 14px/34px Lato, sans-serif; letter-spacing: -.65px; color: #444; text-align: center; }
.diagram { width: 268px; height: 250px; }
.piso { font: 300 13px Lato, sans-serif; fill: #444; }
.fov-label { height: 22px; padding-left: 4px; font: 300 14px/19px Lato, sans-serif; color: #666; letter-spacing: -.05px; }
.fov { height: 66px; display: flex; padding: 4px 5px 0 4px; justify-content: space-between; flex: none; }
.fov .stepper b { letter-spacing: -.4px; }
.slider { width: 132px; height: 34px; display: flex; align-items: center; position: relative; }
.fill { width: 43px; height: 4px; background: #45a6ed; }
.rest { width: 89px; height: 4px; background: #757575; }
.knob { position: absolute; left: 32px; top: 6px; width: 22px; height: 22px; border: 3px solid #45a6ed; border-radius: 50%; background: #fff; }
.light { height: 50px; border-top: 1px solid #ececec; margin-top: 0; }
.view { flex: 1; position: relative; background: linear-gradient(#e1f2f9, #e8f6fb 10%, #eef7ff 19%, #f4fbfd 27%, #fdfefe 40%, #fffefc 56%, #fff6ee 78%, #fff0e5); overflow: hidden; }
.scene { width: 1006px; height: 597px; }
.zooms { position: absolute; left: 12px; top: 18px; display: flex; flex-direction: column; gap: 12px; }
.zooms div { width: 36px; height: 36px; background: #fff; border-radius: 4px; box-shadow: 0 0 3px rgba(0,0,0,.2); }
.zooms svg { width: 36px; height: 36px; fill: none; stroke: #7c7c7c; stroke-width: 1.5; }
.handle { position: absolute; left: 0; top: 240px; width: 32px; height: 59px; background: #45a6ed; display: grid; place-items: center; padding: 0 2px 3px 0; }
.joy { position: absolute; left: 16px; top: 481px; width: 100px; height: 100px; border-radius: 50%; background: #fffaf6; box-shadow: 0 5px 8px rgba(0,0,0,.13); }
.joydot { position: absolute; left: 50px; top: 480px; width: 32px; height: 32px; border-radius: 50%; background: #4ac0fb; }
.modes { position: absolute; right: 16px; top: 16px; display: flex; height: 40px; }
.modes div { background: #fff; display: grid; place-items: center; box-shadow: 0 1px 3px rgba(0,0,0,.18); font: 900 14px Lato, sans-serif; padding-bottom: 1px; }
.modes .orbit { width: 45px; border: 2px solid #45a6ed; z-index: 1; padding: 0; }
.modes .walk { width: 45px; }
.modes .screen { width: 40px; margin: 0 16px; }
.modes .d2 { width: 52px; color: #55a8f0; }
.modes .d3 { width: 52px; color: #fff; background: #45a6ed; }
.taskbar { height: 40px; background: linear-gradient(90deg, #202020, #222 76%, #2a2020 88%, #3c2020); display: flex; align-items: center; flex: none; position: relative; }
.start { width: 48px; display: grid; place-items: center; }
.search { width: 344px; height: 40px; background: #f1f1f1; border: 1px solid #bbb; display: flex; align-items: center; padding-left: 11px; gap: 11px; font: 15px "Noto Sans", sans-serif; letter-spacing: -.4px; color: #333; flex: none; }
.apps { display: flex; height: 40px; margin-left: 2px; }
.apps div { width: 44px; height: 40px; display: grid; place-items: center; position: relative; }
.apps svg { width: 25px; height: 25px; }
.apps .on { background: #535353; }
.apps .last { margin-left: -2px; }
.apps .run::after { content: ""; position: absolute; bottom: 0; left: 5px; right: 4px; height: 2px; background: #76b9ed; }
.apps .on::after { left: 0; right: 0; }
.tray { width: 188px; height: 40px; margin-left: auto; }
.clock { font: 12px/17px "Noto Sans", sans-serif; color: #fff; text-align: center; letter-spacing: -.5px; white-space: nowrap; }
.lang { width: 33px; }
.time { width: 66px; margin-left: 4px; letter-spacing: -.45px; }
.notif { width: 18px; height: 18px; margin-left: 13px; }
.peek { width: 1px; height: 40px; background: #777; margin-left: 19px; margin-right: 4px; }
```
